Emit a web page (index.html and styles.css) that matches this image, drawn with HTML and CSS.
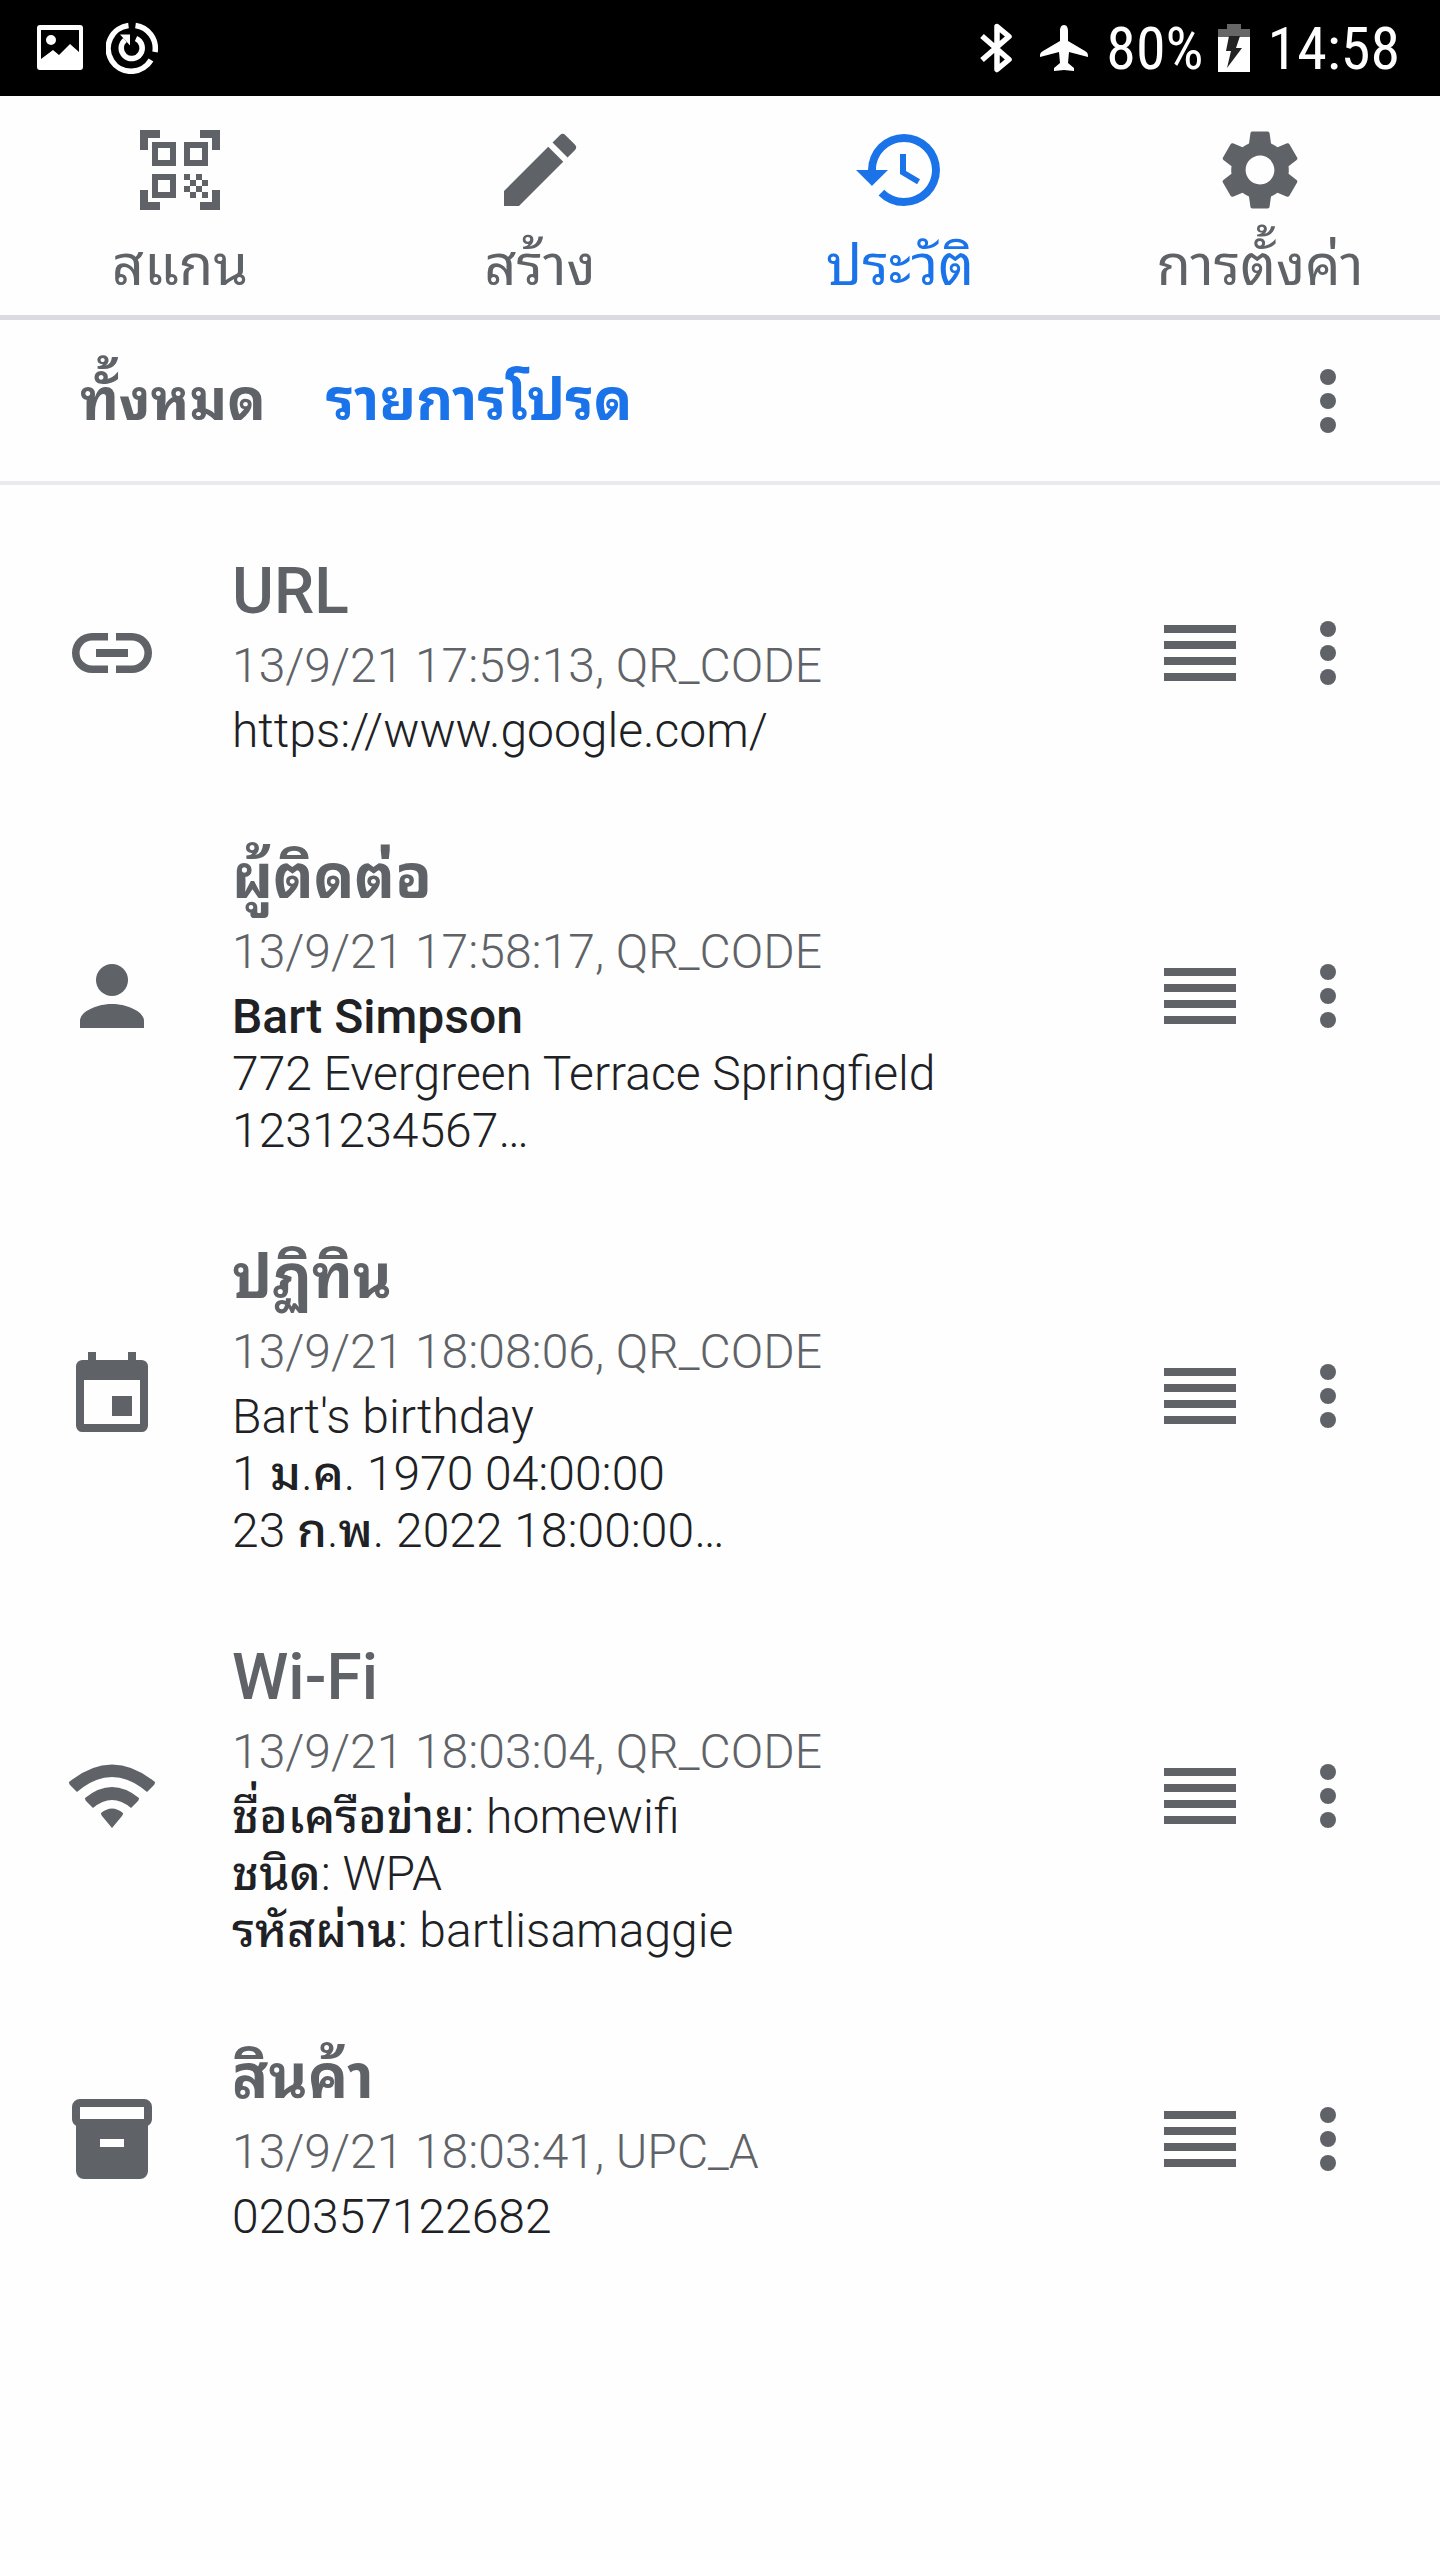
FILE: index.html
```html
<!DOCTYPE html>
<html lang="th">
<head>
<meta charset="utf-8">
<meta name="viewport" content="width=device-width, initial-scale=1">
<title>ประวัติ</title>
<link rel="stylesheet" href="styles.css">
</head>
<body>
<svg class="sprite" aria-hidden="true">
  <symbol id="more" viewBox="0 0 24 24"><circle cx="12" cy="6" r="2"/><circle cx="12" cy="12" r="2"/><circle cx="12" cy="18" r="2"/></symbol>
  <symbol id="drag" viewBox="0 0 24 24"><path d="M3 5h18v2H3zM3 9h18v2H3zM3 13h18v2H3zM3 17h18v2H3z"/></symbol>
</svg>
<header class="status">
  <div class="status-group notices">
    <svg class="status-icon" viewBox="0 0 52 52"><path fill-rule="evenodd" d="M6 3h40a3 3 0 0 1 3 3v39a3 3 0 0 1-3 3H6a3 3 0 0 1-3-3V6a3 3 0 0 1 3-3zm1 5v29l12-9 6 5 11-11 9 8V8zM17 13a5 5 0 1 1 0 10 5 5 0 0 1 0-10z"/></svg>
    <svg class="status-icon" viewBox="0 0 52 52"><g fill="none" stroke="#fff" stroke-width="5.500"><path d="M29.500 3.500A23 23 0 0 1 49 30"/><path d="M45 38A23 23 0 1 1 22.500 3.500"/><path d="M30 16.500A10.500 10.500 0 1 1 19 18"/></g><path d="M14 12.500h10v11z"/></svg>
  </div>
  <div class="status-group system">
    <svg class="bluetooth" viewBox="0 0 32 50"><path fill="none" stroke="#fff" stroke-width="5.500" stroke-linejoin="round" d="M2 13l27 23.500L17 46.500V3.500L29 13.500 2 37"/></svg>
    <svg class="plane" viewBox="0 0 48 48"><path d="M24 1c3 0 4 3 4 6v10l17 10c3 2 3 3 3 6l-19-5-1 11 6 5v3l-10-1-10 1v-3l6-5-1-11-19 5c0-3 0-4 3-6l17-10V7c0-3 1-6 4-6z"/></svg>
    <span>80%</span>
    <svg class="battery" viewBox="0 0 32 48"><path fill="#666" d="M9 0h14v5h9v8H0V5h9z"/><path d="M0 13h32v35H0z"/><path fill="#222" d="M11 12h11l-4 12h6L9 44l4-17H8z"/></svg>
    <time>14:58</time>
  </div>
</header>
<nav class="tabs">
  <a class="tab" href="#scan">
    <svg class="icon" viewBox="0 0 96 96"><path fill-rule="evenodd" d="M8 8h20v8H16v12H8zM68 8h20v20h-8V16H68zM8 68h8v12h12v8H8zM80 68h8v20H68v-8h12zM20 20h24v24H20zm6 6v12h12V26zM52 20h24v24H52zm6 6v12h12V26zM20 52h24v24H20zm6 6v12h12V58zM52 52h6v6h-6zM64 52h6v6h-6zM58 58h6v6h-6zM70 58h6v6h-6zM52 64h6v6h-6zM64 64h6v6h-6zM58 70h6v6h-6zM70 70h6v6h-6z"/></svg>
    <span>สแกน</span>
  </a>
  <a class="tab" href="#create">
    <svg class="icon" viewBox="0 0 24 24"><path d="M3 17.250V21h3.750L17.810 9.940l-3.750-3.750L3 17.250zM20.710 7.040a1 1 0 0 0 0-1.410l-2.340-2.340a1 1 0 0 0-1.410 0l-1.830 1.830 3.750 3.750 1.830-1.830z"/></svg>
    <span>สร้าง</span>
  </a>
  <a class="tab active" href="#history" aria-current="page">
    <svg class="icon" viewBox="0 0 24 24"><path d="M13 3a9 9 0 0 0-9 9H1l3.890 3.890.07.14L9 12H6c0-3.870 3.130-7 7-7s7 3.130 7 7-3.130 7-7 7c-1.930 0-3.680-.79-4.940-2.060l-1.420 1.420A8.954 8.954 0 0 0 13 21a9 9 0 0 0 0-18zm-1 5v5l4.280 2.540.72-1.210-3.500-2.080V8H12z"/></svg>
    <span>ประวัติ</span>
  </a>
  <a class="tab" href="#settings">
    <svg class="icon" viewBox="0 0 24 24"><path d="M19.140 12.940c.04-.3.060-.61.060-.94 0-.32-.02-.64-.07-.94l2.030-1.580a.49.49 0 0 0 .12-.61l-1.920-3.320a.488.488 0 0 0-.59-.22l-2.390.96c-.5-.38-1.030-.7-1.620-.94l-.36-2.540a.484.484 0 0 0-.48-.41h-3.840c-.24 0-.43.17-.47.41l-.36 2.540c-.59.24-1.130.57-1.620.94l-2.390-.96c-.22-.08-.47 0-.59.22L2.740 8.870c-.12.21-.08.47.12.61l2.030 1.580c-.05.3-.09.63-.09.94s.02.640.07.940l-2.030 1.580a.49.49 0 0 0-.12.610l1.920 3.320c.12.220.37.290.59.220l2.390-.96c.5.380 1.030.7 1.620.940l.36 2.540c.05.240.24.410.48.410h3.840c.24 0 .44-.17.470-.41l.36-2.540c.59-.24 1.130-.56 1.620-.94l2.390.96c.22.080.47 0 .59-.22l1.920-3.320c.12-.22.070-.47-.12-.61l-2.010-1.580zM12 15.600c-1.980 0-3.600-1.620-3.600-3.600s1.620-3.600 3.600-3.600 3.600 1.620 3.600 3.600-1.620 3.600-3.600 3.600z"/></svg>
    <span>การตั้งค่า</span>
  </a>
</nav>
<div class="filters">
  <button class="filter" type="button">ทั้งหมด</button>
  <button class="filter active" type="button" aria-pressed="true">รายการโปรด</button>
  <button class="icon-button filter-menu" type="button" aria-label="เมนู"><svg class="icon"><use href="#more"/></svg></button>
</div>
<main>
  <ul class="history">
    <li class="entry">
      <svg class="icon" viewBox="0 0 24 24"><path d="M11 17H7A5 5 0 0 1 7 7h4v1.900H7a3.100 3.100 0 0 0 0 6.200h4zM13 7h4a5 5 0 0 1 0 10h-4v-1.900h4a3.100 3.100 0 0 0 0-6.200h-4zM8 11h8v2H8z"/></svg>
      <div class="details"><h2>URL</h2><p class="meta">13/9/21 17:59:13, QR_CODE</p><p class="content">https://www.google.com/</p></div>
      <button class="icon-button" type="button" aria-label="ย้าย"><svg class="icon"><use href="#drag"/></svg></button>
      <button class="icon-button" type="button" aria-label="เมนู"><svg class="icon"><use href="#more"/></svg></button>
    </li>
    <li class="entry">
      <svg class="icon" viewBox="0 0 24 24"><circle cx="12" cy="8" r="4"/><path d="M12 14c-4 0-8 2-8 4.200V20h16v-1.800c0-2.200-4-4.200-8-4.200z"/></svg>
      <div class="details"><h2 class="thai-title">ผู้ติดต่อ</h2><p class="meta">13/9/21 17:58:17, QR_CODE</p><p class="content"><strong>Bart Simpson</strong><br>772 Evergreen Terrace Springfield<br>1231234567…</p></div>
      <button class="icon-button" type="button" aria-label="ย้าย"><svg class="icon"><use href="#drag"/></svg></button>
      <button class="icon-button" type="button" aria-label="เมนู"><svg class="icon"><use href="#more"/></svg></button>
    </li>
    <li class="entry">
      <svg class="icon" viewBox="0 0 24 24"><path fill-rule="evenodd" d="M6 1h2v2h8V1h2v2h1.400A1.600 1.600 0 0 1 21 4.600v14.800a1.600 1.600 0 0 1-1.600 1.600H4.600A1.600 1.600 0 0 1 3 19.400V4.600A1.600 1.600 0 0 1 4.600 3H6zM5 8v11h14V8zM12 12h5v5h-5z"/></svg>
      <div class="details"><h2 class="thai-title">ปฏิทิน</h2><p class="meta">13/9/21 18:08:06, QR_CODE</p><p class="content">Bart's birthday<br>1 <span class="thai">ม</span>.<span class="thai">ค</span>. 1970 04:00:00<br>23 <span class="thai">ก</span>.<span class="thai">พ</span>. 2022 18:00:00…</p></div>
      <button class="icon-button" type="button" aria-label="ย้าย"><svg class="icon"><use href="#drag"/></svg></button>
      <button class="icon-button" type="button" aria-label="เมนู"><svg class="icon"><use href="#more"/></svg></button>
    </li>
    <li class="entry">
      <svg class="icon" viewBox="0 0 96 96"><path d="M5 34Q48-1 91 34q0 2-1 3l-7 7Q48 14 13 44l-7-7q-1-1-1-3zM21 50q27-22 54 0 0 2-1 3l-7 7Q48 44 29 60l-7-7q-1-1-1-3zM37 65q11-9 22 0 0 2-1 3L48 80 38 68q-1-1-1-3z"/></svg>
      <div class="details"><h2>Wi-Fi</h2><p class="meta">13/9/21 18:03:04, QR_CODE</p><p class="content"><span class="thai">ชื่อเครือข่าย</span>: homewifi<br><span class="thai">ชนิด</span>: WPA<br><span class="thai">รหัสผ่าน</span>: bartlisamaggie</p></div>
      <button class="icon-button" type="button" aria-label="ย้าย"><svg class="icon"><use href="#drag"/></svg></button>
      <button class="icon-button" type="button" aria-label="เมนู"><svg class="icon"><use href="#more"/></svg></button>
    </li>
    <li class="entry">
      <svg class="icon" viewBox="0 0 24 24"><path fill-rule="evenodd" d="M4 2h16a2 2 0 0 1 2 2v3a2 2 0 0 1-1 1.700V20a2 2 0 0 1-2 2H5a2 2 0 0 1-2-2V8.700A2 2 0 0 1 2 7V4a2 2 0 0 1 2-2zm0 2v3h16V4zM9 12v2h6v-2z"/></svg>
      <div class="details"><h2 class="thai-title">สินค้า</h2><p class="meta">13/9/21 18:03:41, UPC_A</p><p class="content">020357122682</p></div>
      <button class="icon-button" type="button" aria-label="ย้าย"><svg class="icon"><use href="#drag"/></svg></button>
      <button class="icon-button" type="button" aria-label="เมนู"><svg class="icon"><use href="#more"/></svg></button>
    </li>
  </ul>
</main>
</body>
</html>
```
FILE: styles.css
```css
* { box-sizing: border-box; }

body {
  margin: 0;
  background: #fefefe;
  color: #202124;
  font-family: Roboto, "Noto Sans Thai Looped", "Noto Sans", sans-serif;
  font-size: 48px;
  line-height: 57px;
}

.sprite { display: none; }

svg {
  display: block;
  flex: none;
  fill: currentColor;
}

.icon {
  width: 96px;
  height: 96px;
}

.status {
  display: flex;
  justify-content: space-between;
  height: 96px;
  padding: 0 40px 0 34px;
  background: #000;
  color: #fff;
  font-family: "Roboto Condensed", "Liberation Sans Narrow", sans-serif;
  font-size: 60px;
}

.status-group {
  display: flex;
  align-items: center;
}

.notices { gap: 20px; }
.system { gap: 14px; }
.status-icon { width: 52px; height: 52px; }
.bluetooth { width: 32px; height: 50px; margin-right: 14px; }
.plane { width: 48px; height: 48px; margin-right: 4px; }
.battery { width: 32px; height: 48px; margin-right: 4px; }

.tabs {
  display: grid;
  grid-template-columns: repeat(4, 1fr);
  height: 224px;
  border-bottom: 5px solid #dadae0;
}

.tab {
  display: flex;
  flex-direction: column;
  align-items: center;
  gap: 8px;
  padding-top: 26px;
  color: #5f6368;
  font-size: 56px;
  line-height: 80px;
  text-decoration: none;
}

.filters {
  display: flex;
  align-items: center;
  gap: 60px;
  height: 165px;
  padding: 0 64px 0 80px;
  border-bottom: 4px solid #e8eaed;
}

.filter, .icon-button {
  padding: 0;
  border: 0;
  background: none;
  color: #5f6368;
}

.filter {
  font: inherit;
  font-size: 57px;
  font-weight: 700;
  line-height: 80px;
}

.tab.active, .filter.active { color: #1a73e8; }
.filter-menu { margin-left: auto; }

.history {
  margin: 0;
  padding: 25px 0 0;
  list-style: none;
}

.entry {
  display: flex;
  align-items: center;
  gap: 32px;
  padding: 0 64px;
  color: #5f6368;
}

.details {
  flex: 1;
  padding: 44px 0 37px 40px;
}

h2, p { margin: 0; }

h2 {
  font-size: 64px;
  font-weight: 500;
  line-height: 75px;
}

.thai-title {
  font-size: 60px;
  font-weight: 700;
}

.meta, .content {
  margin-top: 8px;
  font-weight: 300;
}

.content { color: #202124; }
.thai, strong { font-weight: 500; }
```
